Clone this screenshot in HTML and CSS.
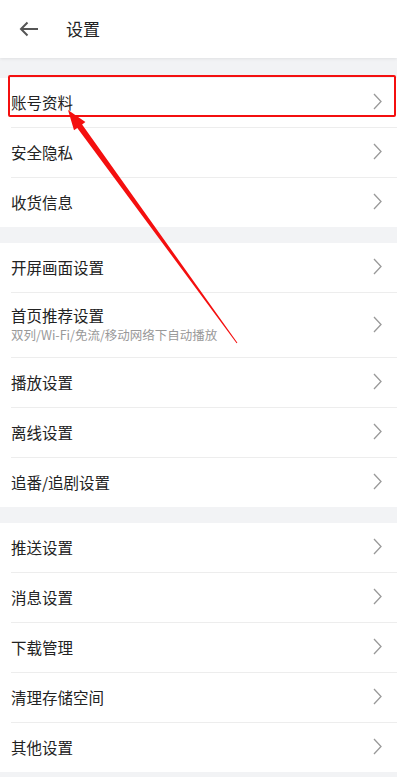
FILE: index.html
```html
<!DOCTYPE html>
<html lang="zh-CN">

<head>
  <meta charset="UTF-8">
  <meta name="viewport" content="width=device-width, initial-scale=1.0">
  <title>设置</title>
  <link rel="stylesheet" href="styles.css">
</head>

<body>
  <div class="header">
    <svg class="back" width="20" height="16" viewBox="0 0 20 16">
      <path d="M19 8H2M8.5 1.5L2 8l6.5 6.5" fill="none" stroke="#555" stroke-width="2" />
    </svg>
    <div class="header-title">设置</div>
  </div>

  <div class="group">
    <div class="row"><span class="row-text">账号资料</span><svg class="arrow" viewBox="0 0 9 17"><path d="M1 1l7 7.5L1 16" /></svg></div>
    <div class="row"><span class="row-text">安全隐私</span><svg class="arrow" viewBox="0 0 9 17"><path d="M1 1l7 7.5L1 16" /></svg></div>
    <div class="row"><span class="row-text">收货信息</span><svg class="arrow" viewBox="0 0 9 17"><path d="M1 1l7 7.5L1 16" /></svg></div>
  </div>

  <div class="group">
    <div class="row"><span class="row-text">开屏画面设置</span><svg class="arrow" viewBox="0 0 9 17"><path d="M1 1l7 7.5L1 16" /></svg></div>
    <div class="row row-tall">
      <div>
        <div class="row-text">首页推荐设置</div>
        <div class="row-sub">双列/Wi-Fi/免流/移动网络下自动播放</div>
      </div>
      <svg class="arrow" viewBox="0 0 9 17"><path d="M1 1l7 7.5L1 16" /></svg>
    </div>
    <div class="row"><span class="row-text">播放设置</span><svg class="arrow" viewBox="0 0 9 17"><path d="M1 1l7 7.5L1 16" /></svg></div>
    <div class="row"><span class="row-text">离线设置</span><svg class="arrow" viewBox="0 0 9 17"><path d="M1 1l7 7.5L1 16" /></svg></div>
    <div class="row"><span class="row-text">追番/追剧设置</span><svg class="arrow" viewBox="0 0 9 17"><path d="M1 1l7 7.5L1 16" /></svg></div>
  </div>

  <div class="group">
    <div class="row"><span class="row-text">推送设置</span><svg class="arrow" viewBox="0 0 9 17"><path d="M1 1l7 7.5L1 16" /></svg></div>
    <div class="row"><span class="row-text">消息设置</span><svg class="arrow" viewBox="0 0 9 17"><path d="M1 1l7 7.5L1 16" /></svg></div>
    <div class="row"><span class="row-text">下载管理</span><svg class="arrow" viewBox="0 0 9 17"><path d="M1 1l7 7.5L1 16" /></svg></div>
    <div class="row"><span class="row-text">清理存储空间</span><svg class="arrow" viewBox="0 0 9 17"><path d="M1 1l7 7.5L1 16" /></svg></div>
    <div class="row"><span class="row-text">其他设置</span><svg class="arrow" viewBox="0 0 9 17"><path d="M1 1l7 7.5L1 16" /></svg></div>
  </div>

  <!-- 标注：红框 + 箭头 -->
  <div class="mark-box"></div>
  <svg class="mark-arrow" width="397" height="777" viewBox="0 0 397 777">
    <polygon fill="#f40f0f"
      points="68,110 85.4,122.1 82.1,124.4 237.4,342.7 236.6,343.3 77.3,127.9 74,130.3" />
  </svg>
</body>

</html>
```

FILE: styles.css
```css
* {
  margin: 0;
  padding: 0;
  box-sizing: border-box;
}

body {
  width: 397px;
  height: 777px;
  overflow: hidden;
  background: #f2f3f5;
  font-family: "Noto Sans CJK SC", "Noto Sans", sans-serif;
  color: #222;
  position: relative;
}

.header {
  height: 58px;
  background: #fff;
  display: flex;
  align-items: center;
  padding-left: 19px;
  box-shadow: 0 1px 3px rgba(0, 0, 0, 0.08);
  margin-bottom: 20px;
}

.header .back {
  display: block;
}

.header .header-title {
  font-size: 17px;
  margin-left: 27px;
  margin-top: -1px;
}

.group {
  background: #fff;
  padding-left: 11px;
  margin-bottom: 16px;
}

.group .row {
  height: 50px;
  display: flex;
  align-items: center;
  justify-content: space-between;
  padding-right: 14px;
  padding-bottom: 2px;
  border-top: 1px solid #ededed;
}

.group .row:first-child {
  height: 49px;
  border-top: none;
}

.group .row-tall {
  height: 65px;
}

.row .row-text {
  font-size: 15.5px;
  line-height: 20px;
}

.row .row-sub {
  font-size: 12.5px;
  color: #999;
  line-height: 16px;
  margin-top: 2px;
}

.row .arrow {
  width: 9px;
  height: 17px;
  margin-right: 1px;
  fill: none;
  stroke: #999;
  stroke-width: 1.3;
}

.mark-box {
  position: absolute;
  left: 8px;
  top: 75px;
  width: 388px;
  height: 42px;
  border: 2px solid #f40f0f;
  border-radius: 2px;
}

.mark-arrow {
  position: absolute;
  left: 0;
  top: 0;
}
```
